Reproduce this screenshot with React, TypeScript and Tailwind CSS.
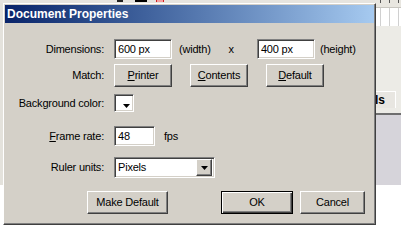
import React from 'react';

const font = "font-['Tahoma','Liberation_Sans',sans-serif] text-[11px] tracking-[-0.2px] text-black";

const raised =
  'border-t border-l border-t-white border-l-white border-r border-b border-r-[#404040] border-b-[#404040] shadow-[inset_-1px_-1px_0_#808080] bg-[#d4d0c8]';
const sunken =
  'border-t border-l border-t-[#808080] border-l-[#808080] border-r border-b border-r-white border-b-white shadow-[inset_1px_1px_0_#404040,inset_-1px_-1px_0_#d4d0c8] bg-white';

interface IBtnProps {
  width: string;
  children: React.ReactNode;
  isDefault?: boolean;
}

const Btn: React.FC<IBtnProps> = ({ width, children, isDefault }) => (
  <div
    className={
      isDefault
        ? `${width} h-[23px] flex items-center justify-center bg-[#d4d0c8] border border-black shadow-[inset_1px_1px_0_#fff,inset_-1px_-1px_0_#404040,inset_-2px_-2px_0_#808080]`
        : `${width} h-[23px] flex items-center justify-center ${raised}`
    }
  >
    {children}
  </div>
);

const Field: React.FC<{ width: string; value: string }> = ({ width, value }) => (
  <div className={`${width} h-[20px] flex items-center pl-[3px] ${sunken}`}>{value}</div>
);

const Label: React.FC<{ children: React.ReactNode }> = ({ children }) => (
  <div className="w-[99px] shrink-0 text-right">{children}</div>
);

const Arrow: React.FC = () => (
  <svg width="7" height="4" viewBox="0 0 7 4">
    <path d="M0 0h7L3.5 4z" fill="#000" />
  </svg>
);

const App: React.FC = () => {
  return (
    <div className={`relative w-[401px] h-[242px] overflow-hidden bg-white ${font}`}>
      {/* application behind the dialog */}
      <div className="absolute left-0 top-0 w-full h-[3px] bg-[#e6e4df]">
        <div className="absolute left-[117px] top-0 w-[6px] h-[2px] bg-[#222]" />
        <div className="absolute left-[135px] top-0 w-[12px] h-[2px] bg-black" />
        <div className="absolute left-[156px] top-0 w-[8px] h-[2px] bg-[#f4a0a0] border-x border-[#d02020]" />
      </div>
      <div className="absolute left-0 top-[3px] w-[3px] h-[182px] bg-[#e4e2dc]" />
      <div className="absolute left-[375px] top-0 w-[26px] h-[185px] bg-[#ecebe6] flex flex-col">
        <div className="h-[8px] bg-[#e8e6e0] border-b border-[#c8c6c0] flex items-start gap-[8px] pl-[5px]">
          <div className="w-px h-[3px] bg-[#555]" />
          <div className="w-px h-[3px] bg-[#555]" />
          <div className="w-px h-[3px] bg-[#555]" />
        </div>
        <div className="h-[18px] bg-white flex pl-[5px] gap-[8px]">
          <div className="w-px h-full bg-[#d0d0d0]" />
          <div className="w-px h-full bg-[#d0d0d0]" />
          <div className="w-px h-full bg-[#d0d0d0]" />
        </div>
        <div className="mt-[65px] h-[17px] w-[21px] border-t border-r border-white bg-[#e8e6e1] flex items-center text-[12px] font-bold leading-none">
          ls
        </div>
        <div className="mt-[5px] h-[2px] bg-[#6e6e6e]" />
        <div className="flex-1 bg-[#d6d4da]" />
      </div>

      {/* dialog window */}
      <div className="absolute left-[3px] top-[3px] w-[373px] h-[222px] p-px bg-[#d4d0c8] border-t border-l border-t-white border-l-white border-r border-b border-r-[#404040] border-b-[#404040] shadow-[inset_-1px_-1px_0_#808080] flex flex-col">
        <div className="h-[18px] shrink-0 flex items-center pl-[2px] bg-gradient-to-r from-[#0a246a] to-[#a6caf0] text-white font-bold text-[12px] tracking-normal">
          Document Properties
        </div>

        <div className="flex flex-col pt-[16px]">
          <div className="h-[20px] flex items-center">
            <Label>Dimensions:</Label>
            <div className="ml-[10px] flex items-center">
              <Field width="w-[58px]" value="600 px" />
              <span className="ml-[7px]">(width)</span>
              <span className="ml-[18px]">x</span>
              <div className="ml-[23px]">
                <Field width="w-[58px]" value="400 px" />
              </div>
              <span className="ml-[5px]">(height)</span>
            </div>
          </div>

          <div className="mt-[5px] h-[23px] flex items-center">
            <Label>Match:</Label>
            <div className="ml-[10px] flex items-center gap-[18px]">
              <Btn width="w-[58px]">
                <span>
                  <u>P</u>rinter
                </span>
              </Btn>
              <Btn width="w-[58px]">
                <span>
                  <u>C</u>ontents
                </span>
              </Btn>
              <Btn width="w-[58px]">
                <span>
                  <u>D</u>efault
                </span>
              </Btn>
            </div>
          </div>

          <div className="mt-[7px] h-[18px] flex items-center">
            <Label>Background color:</Label>
            <div className={`ml-[10px] w-[20px] h-[18px] flex items-end justify-end pr-[3px] pb-[3px] ${sunken}`}>
              <Arrow />
            </div>
          </div>

          <div className="mt-[14px] h-[20px] flex items-center">
            <Label>
              <u>F</u>rame rate:
            </Label>
            <div className="ml-[10px] flex items-center">
              <Field width="w-[41px]" value="48" />
              <span className="ml-[9px]">fps</span>
            </div>
          </div>

          <div className="mt-[11px] h-[21px] flex items-center">
            <Label>Ruler units:</Label>
            <div className={`ml-[10px] w-[101px] h-[21px] flex items-center pl-[3px] pr-[2px] ${sunken}`}>
              <span className="flex-1">Pixels</span>
              <div className={`w-[16px] h-[17px] flex items-center justify-center ${raised}`}>
                <Arrow />
              </div>
            </div>
          </div>

          <div className="mt-[13px] h-[23px] flex items-center">
            <div className="ml-[82px]">
              <Btn width="w-[81px]">Make Default</Btn>
            </div>
            <div className="ml-[53px]">
              <Btn width="w-[72px]" isDefault>
                OK
              </Btn>
            </div>
            <div className="ml-[7px]">
              <Btn width="w-[65px]">Cancel</Btn>
            </div>
          </div>
        </div>
      </div>
    </div>
  );
};

export default App;
